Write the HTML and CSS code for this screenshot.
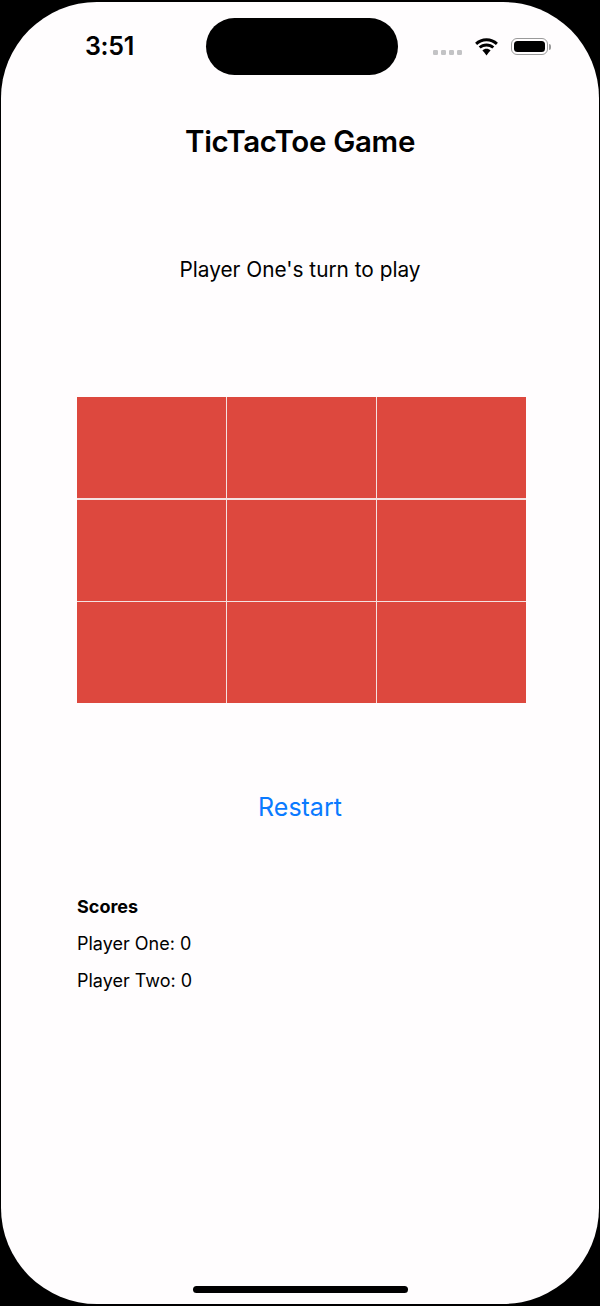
FILE: index.html
```html
<!DOCTYPE html>
<html lang="en">
<head>
<meta charset="utf-8">
<title>TicTacToe Game</title>
<link rel="stylesheet" href="styles.css">
</head>
<body>
<div class="device">
  <div class="screen">
    <div class="status-bar">
      <span class="time">3:51</span>
      <div class="island"></div>
      <div class="status-icons">
        <div class="signal"><i></i><i></i><i></i><i></i></div>
        <svg class="wifi" width="25" height="18" viewBox="0 0 25 18">
          <path d="M12.5 3.2c3.6 0 6.9 1.4 9.4 3.7l2-2.1C20.9 2 16.9 0.3 12.5 0.3S4.1 2 1.1 4.8l2 2.1c2.5-2.3 5.8-3.7 9.4-3.700z" fill="#000"/>
          <path d="M12.5 8.4c2.2 0 4.2 0.8 5.8 2.2l2-2.1c-2.1-1.9-4.8-3-7.8-3s-5.7 1.1-7.8 3l2 2.1c1.6-1.4 3.6-2.2 5.8-2.2z" fill="#000"/>
          <path d="M12.5 13.4c0.9 0 1.8 0.3 2.4 0.9l-2.4 3.2l-2.4-3.2c0.6-0.6 1.5-0.9 2.4-0.9z M12.5 10.8c1.6 0 3 0.6 4.1 1.6l-1.7 1.9l0 0c-0.6-0.6-1.5-0.9-2.4-0.9s-1.8 0.3-2.4 0.9l-1.7-1.9c1.1-1 2.5-1.6 4.1-1.6z" fill="#000"/>
        </svg>
        <div class="battery"><div class="battery-fill"></div></div>
        <div class="battery-cap"></div>
      </div>
    </div>

    <h1 class="title">TicTacToe Game</h1>
    <p class="turn">Player One's turn to play</p>

    <div class="board">
      <div class="cell"></div><div class="cell"></div><div class="cell"></div>
      <div class="cell"></div><div class="cell"></div><div class="cell"></div>
      <div class="cell"></div><div class="cell"></div><div class="cell"></div>
    </div>

    <button class="restart" type="button">Restart</button>

    <section class="scores">
      <h2 class="scores-title">Scores</h2>
      <p class="score">Player One: 0</p>
      <p class="score">Player Two: 0</p>
    </section>

    <div class="spacer"></div>
    <div class="home-indicator"></div>
  </div>
</div>
</body>
</html>
```

FILE: styles.css
```css
html, body {
  margin: 0;
  padding: 0;
  background: #000;
  overflow: hidden;
}

.device {
  width: 600px;
  height: 1306px;
  box-sizing: border-box;
  padding: 2px 1px 2px 1px;
  background: #000;
}

.screen {
  height: 100%;
  background: #fffdfe;
  border-radius: 96px;
  display: flex;
  flex-direction: column;
  font-family: Inter, "Liberation Sans", sans-serif;
  color: #000;
}

.status-bar {
  display: flex;
  align-items: center;
  height: 57px;
  margin-top: 16px;
}

.time {
  width: 121px;
  padding-left: 84px;
  box-sizing: content-box;
  font-size: 25px;
  font-weight: 600;
  letter-spacing: -0.3px;
  line-height: 1;
}

.island {
  width: 192px;
  height: 57px;
  border-radius: 29px;
  background: #000;
}

.status-icons {
  display: flex;
  align-items: center;
  margin-left: 35px;
}

.signal {
  display: flex;
  gap: 3.5px;
  margin-top: 12px;
}

.signal i {
  width: 4.5px;
  height: 4.5px;
  border-radius: 1.2px;
  background: #c3c3c5;
}

.wifi {
  margin-left: 12px;
}

.battery {
  margin-left: 12px;
  width: 37px;
  height: 17px;
  box-sizing: border-box;
  border: 1.5px solid #9a9a9a;
  border-radius: 6px;
  padding: 2px;
}

.battery-fill {
  width: 100%;
  height: 100%;
  background: #000;
  border-radius: 3.5px;
}

.battery-cap {
  width: 2px;
  height: 6px;
  margin-left: 1px;
  background: #9a9a9a;
  border-radius: 0 2px 2px 0;
}

.title {
  margin: 48px 0 0;
  text-align: center;
  font-size: 29.5px;
  font-weight: 600;
  letter-spacing: -0.3px;
  line-height: 36px;
}

.turn {
  margin: 98px 0 0;
  text-align: center;
  font-size: 20.8px;
  font-weight: 400;
  line-height: 26px;
}

.board {
  margin: 114px 0 0 76px;
  width: 449px;
  height: 306px;
  display: grid;
  grid-template-columns: repeat(3, 1fr);
  grid-template-rows: repeat(3, 1fr);
  gap: 1.5px;
  background: #f4e2e1;
}

.cell {
  background: #dd483e;
}

.restart {
  margin: 89px auto 0;
  padding: 0;
  border: none;
  background: none;
  font-family: Inter, "Liberation Sans", sans-serif;
  font-size: 25px;
  line-height: 30px;
  color: #0a7aff;
}

.scores {
  margin: 74px 0 0 76px;
}

.scores-title {
  margin: 0;
  font-size: 18px;
  font-weight: 700;
  line-height: 22px;
}

.score {
  margin: 15px 0 0;
  font-size: 18px;
  font-weight: 400;
  line-height: 22px;
}

.spacer {
  flex: 1;
}

.home-indicator {
  width: 215px;
  height: 7px;
  border-radius: 4px;
  background: #000;
  margin: 0 auto 11px;
}
```
